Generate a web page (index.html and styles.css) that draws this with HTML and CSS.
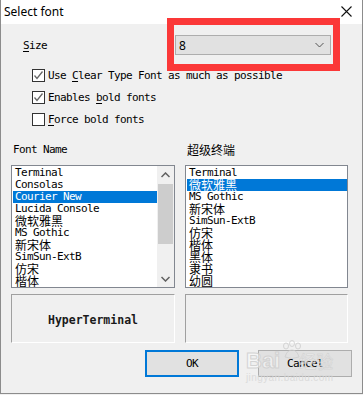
FILE: index.html
```html
<!DOCTYPE html>
<html>
<head>
    <title>Select font</title>
    <link rel="stylesheet" href="styles.css">
</head>
<body>

<div class="window">
    <div class="titlebar">
        <span class="title">Select font</span>
        <svg class="close" width="11" height="11" viewBox="0 0 11 11">
            <path d="M0.5 0.5 L10.5 10.5 M10.5 0.5 L0.5 10.5" stroke="#111" stroke-width="1.1" fill="none"/>
        </svg>
    </div>

    <div class="content">
        <div class="size-row">
            <label class="size-label"><u>S</u>ize</label>
            <div class="select-wrap">
                <div class="select">
                    <span class="select-value">8</span>
                    <svg width="9" height="6" viewBox="0 0 9 6">
                        <path d="M0.5 1 L4.5 5 L8.5 1" stroke="#555" stroke-width="1" fill="none"/>
                    </svg>
                </div>
            </div>
        </div>

        <div class="checks">
            <div class="check-row">
                <span class="box"><svg width="11" height="11" viewBox="0 0 11 11"><path d="M1.5 5.5 L4 8.5 L9.5 1.5" stroke="#666" stroke-width="1.3" fill="none"/></svg></span>
                <span class="mono">Use <u>C</u>lear Type Font as much as possible</span>
            </div>
            <div class="check-row">
                <span class="box"><svg width="11" height="11" viewBox="0 0 11 11"><path d="M1.5 5.5 L4 8.5 L9.5 1.5" stroke="#666" stroke-width="1.3" fill="none"/></svg></span>
                <span class="mono">Enables <u>b</u>old fonts</span>
            </div>
            <div class="check-row">
                <span class="box"></span>
                <span class="mono"><u>F</u>orce bold fonts</span>
            </div>
        </div>

        <div class="columns">
            <div class="column">
                <div class="col-head mono">Font Name</div>
                <div class="listbox">
                    <div class="items">
                        <div class="item mono">Terminal</div>
                        <div class="item mono">Consolas</div>
                        <div class="item mono selected">Courier New</div>
                        <div class="item mono">Lucida Console</div>
                        <div class="item cjk">微软雅黑</div>
                        <div class="item mono">MS Gothic</div>
                        <div class="item cjk">新宋体</div>
                        <div class="item mono">SimSun-ExtB</div>
                        <div class="item cjk">仿宋</div>
                        <div class="item cjk">楷体</div>
                    </div>
                    <div class="scrollbar">
                        <div class="arrow">
                            <svg width="9" height="6" viewBox="0 0 9 6"><path d="M0.5 5 L4.5 1 L8.5 5" stroke="#606060" stroke-width="1.5" fill="none"/></svg>
                        </div>
                        <div class="track"><div class="thumb"></div></div>
                        <div class="arrow">
                            <svg width="9" height="6" viewBox="0 0 9 6"><path d="M0.5 1 L4.5 5 L8.5 1" stroke="#606060" stroke-width="1.5" fill="none"/></svg>
                        </div>
                    </div>
                </div>
                <div class="preview">
                    <span class="preview-text">HyperTerminal</span>
                </div>
            </div>

            <div class="column right">
                <div class="col-head cjk-head">超级终端</div>
                <div class="listbox">
                    <div class="items">
                        <div class="item mono">Terminal</div>
                        <div class="item cjk selected">微软雅黑</div>
                        <div class="item mono">MS Gothic</div>
                        <div class="item cjk">新宋体</div>
                        <div class="item mono">SimSun-ExtB</div>
                        <div class="item cjk">仿宋</div>
                        <div class="item cjk">楷体</div>
                        <div class="item cjk">黑体</div>
                        <div class="item cjk">隶书</div>
                        <div class="item cjk">幼圆</div>
                    </div>
                </div>
                <div class="preview"></div>
            </div>
        </div>

        <div class="buttons">
            <div class="btn default mono">OK</div>
            <div class="btn mono">Cancel</div>
        </div>
    </div>

    <div class="watermark">
        <div class="wm-line">
            <span class="wm-bai">Bai</span>
            <svg class="wm-paw" width="22" height="20" viewBox="0 0 22 20">
                <g fill="none" stroke="#cfcfcf" stroke-width="1">
                    <ellipse cx="5" cy="6" rx="2.5" ry="3"/>
                    <ellipse cx="11" cy="3.5" rx="2.5" ry="3"/>
                    <ellipse cx="17" cy="6" rx="2.5" ry="3"/>
                    <path d="M4 17 Q6 10 11 10 Q16 10 18 17 Q11 20 4 17 Z"/>
                </g>
            </svg>
            <span class="wm-jy">经验</span>
        </div>
        <div class="wm-url">jingyan.baidu.com</div>
    </div>
</div>

</body>
</html>
```

FILE: styles.css
```css
body {
    margin: 0;
    background: #f0f0f0;
}

.window {
    position: relative;
    width: 363px;
    height: 394px;
    box-sizing: border-box;
    border: 1px solid #8c8c8c;
    border-top: none;
    background: #f0f0f0;
    overflow: hidden;
}

.titlebar {
    height: 24px;
    background: #fff;
    display: flex;
    align-items: center;
    justify-content: space-between;
    padding: 0 10px 0 3px;
}

.title {
    font-family: 'Noto Sans', sans-serif;
    font-size: 12px;
    color: #000;
    margin-top: -1px;
}

.close {
    margin-top: -1px;
}

.content {
    padding: 0 9px 0 10px;
}

.mono {
    font-family: 'DejaVu Sans Mono', monospace;
    font-size: 11px;
    letter-spacing: -0.62px;
    color: #000;
}

.cjk {
    font-family: 'Noto Sans CJK SC', sans-serif;
    font-size: 12px;
}

u {
    text-decoration-thickness: 1px;
    text-underline-offset: 2px;
}

/* size row */
.size-row {
    display: flex;
    align-items: center;
    margin-top: 11px;
    height: 20px;
}

.size-label {
    width: 152px;
    padding-left: 12px;
    font-family: 'DejaVu Sans Mono', monospace;
    font-size: 11px;
    letter-spacing: -0.62px;
}

.select-wrap {
    position: relative;
}

.select-wrap::after {
    content: "";
    position: absolute;
    top: -17px;
    left: -8px;
    right: -9px;
    bottom: -16px;
    border: 7px solid #fb3838;
}

.select {
    width: 156px;
    height: 20px;
    box-sizing: border-box;
    border: 1px solid #adadad;
    background: #e1e1e1;
    display: flex;
    align-items: center;
    justify-content: space-between;
    padding: 0 6px 0 3px;
}

.select-value {
    font-family: 'Noto Sans', sans-serif;
    font-size: 12px;
}

/* checkboxes */
.checks {
    margin-top: 9px;
    padding-left: 21px;
}

.check-row {
    display: flex;
    align-items: center;
    height: 22px;
    gap: 3px;
}

.box {
    width: 13px;
    height: 13px;
    box-sizing: border-box;
    border: 1px solid #333;
    background: #fff;
    display: flex;
    align-items: center;
    justify-content: center;
}

/* lists */
.columns {
    display: flex;
    gap: 10px;
    margin-top: 12px;
}

.column {
    width: 164px;
}

.column.right {
    width: 163px;
}

.col-head {
    height: 16px;
    line-height: 16px;
    padding-left: 2px;
    margin-bottom: 7px;
}

.cjk-head {
    font-family: 'Noto Sans CJK SC', sans-serif;
    font-size: 12px;
}

.listbox {
    height: 123px;
    box-sizing: border-box;
    border: 1px solid #828790;
    background: #fff;
    display: flex;
    overflow: hidden;
}

.items {
    flex: 1;
    padding: 1px 0 0 1px;
}

.item {
    height: 12px;
    line-height: 12px;
    padding-left: 2px;
    white-space: nowrap;
    color: #000;
}

.item.selected {
    background: #0078d7;
    color: #fff;
}

.scrollbar {
    width: 17px;
    background: #f0f0f0;
    display: flex;
    flex-direction: column;
}

.arrow {
    height: 17px;
    display: flex;
    align-items: center;
    justify-content: center;
}

.track {
    flex: 1;
    padding: 1px 1px 0 1px;
}

.thumb {
    height: 60px;
    background: #cdcdcd;
}

.preview {
    height: 49px;
    margin-top: 6px;
    box-sizing: border-box;
    border: 1px solid #a0a0a0;
    border-right-color: #fff;
    border-bottom-color: #fff;
    display: flex;
    align-items: center;
    justify-content: center;
}

.preview-text {
    font-family: 'DejaVu Sans Mono', monospace;
    font-size: 11.5px;
    font-weight: bold;
    letter-spacing: 0;
    color: #1a1a1a;
    margin-top: 2px;
}

/* buttons */
.buttons {
    display: flex;
    justify-content: flex-end;
    gap: 19px;
    margin-top: 7px;
    padding-right: 1px;
}

.btn {
    width: 94px;
    height: 27px;
    box-sizing: border-box;
    border: 1px solid #adadad;
    background: #e1e1e1;
    display: flex;
    align-items: center;
    justify-content: center;
}

.btn.default {
    border: 2px solid #0078d7;
}

/* baidu watermark */
.watermark {
    position: absolute;
    left: 245px;
    top: 340px;
    opacity: 0.85;
}

.wm-line {
    display: flex;
    align-items: flex-end;
    height: 31px;
}

.wm-paw {
    align-self: flex-start;
    margin-left: 1px;
}

.wm-bai {
    font-family: 'Liberation Sans', sans-serif;
    font-size: 22px;
    font-weight: bold;
    line-height: 20px;
    color: rgba(255, 255, 255, 0.6);
    -webkit-text-stroke: 1px #cfcfcf;
}

.wm-jy {
    font-family: 'Noto Sans CJK SC', sans-serif;
    font-size: 17px;
    line-height: 20px;
    margin-left: -4px;
    color: rgba(255, 255, 255, 0.6);
    -webkit-text-stroke: 0.6px #cfcfcf;
}

.wm-url {
    font-family: 'Liberation Sans', sans-serif;
    font-size: 10px;
    color: #d8d8d8;
    letter-spacing: 0.4px;
    margin-top: 1px;
}
```
